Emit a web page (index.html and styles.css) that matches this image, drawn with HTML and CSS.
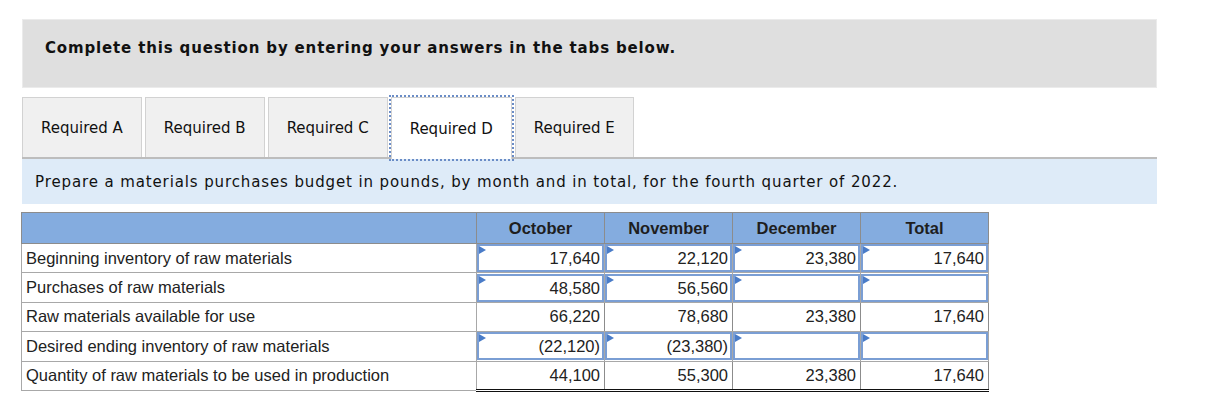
FILE: index.html
```html
<!DOCTYPE html>
<html>
<head>
<meta charset="utf-8">
<link rel="stylesheet" href="styles.css">
</head>
<body>
<div class="page">
  <div class="prompt">Complete this question by entering your answers in the tabs below.</div>
  <div class="tabs">
    <div class="tab">Required A</div>
    <div class="tab">Required B</div>
    <div class="tab">Required C</div>
    <div class="tab active">Required D</div>
    <div class="tab">Required E</div>
  </div>
  <div class="band">Prepare a materials purchases budget in pounds, by month and in total, for the fourth quarter of 2022.</div>
  <table class="budget">
    <colgroup>
      <col class="c-label"><col class="c-num"><col class="c-num"><col class="c-num"><col class="c-num">
    </colgroup>
    <thead>
      <tr><th></th><th>October</th><th>November</th><th>December</th><th>Total</th></tr>
    </thead>
    <tbody>
      <tr>
        <td class="label">Beginning inventory of raw materials</td>
        <td class="in"><div class="box">17,640</div></td>
        <td class="in"><div class="box">22,120</div></td>
        <td class="in"><div class="box">23,380</div></td>
        <td class="in"><div class="box">17,640</div></td>
      </tr>
      <tr>
        <td class="label">Purchases of raw materials</td>
        <td class="in"><div class="box">48,580</div></td>
        <td class="in"><div class="box">56,560</div></td>
        <td class="in"><div class="box"></div></td>
        <td class="in"><div class="box"></div></td>
      </tr>
      <tr class="sub">
        <td class="label">Raw materials available for use</td>
        <td class="num">66,220</td>
        <td class="num">78,680</td>
        <td class="num">23,380</td>
        <td class="num">17,640</td>
      </tr>
      <tr>
        <td class="label">Desired ending inventory of raw materials</td>
        <td class="in"><div class="box">(22,120)</div></td>
        <td class="in"><div class="box">(23,380)</div></td>
        <td class="in"><div class="box"></div></td>
        <td class="in"><div class="box"></div></td>
      </tr>
      <tr class="sub total">
        <td class="label">Quantity of raw materials to be used in production</td>
        <td class="num">44,100</td>
        <td class="num">55,300</td>
        <td class="num">23,380</td>
        <td class="num">17,640</td>
      </tr>
    </tbody>
  </table>
</div>
</body>
</html>
```

FILE: styles.css
```css
html, body {
  margin: 0;
  padding: 0;
  background: #fff;
}

.page {
  padding: 19px 0 0 22px;
  width: 1135px;
}

.prompt {
  box-sizing: border-box;
  height: 69px;
  background: #dfdfdf;
  border: 1px solid #ebebeb;
  padding: 19px 0 0 22px;
  font-family: "DejaVu Sans", Verdana, sans-serif;
  font-weight: bold;
  font-size: 15px;
  letter-spacing: 0.85px;
  line-height: 18px;
  color: #111;
}

.tabs {
  display: flex;
  gap: 3px;
  margin-top: 9px;
  height: 60px;
  position: relative;
  z-index: 1;
}

.tab {
  box-sizing: border-box;
  display: flex;
  align-items: center;
  padding: 0 18px;
  background: #f0f0f0;
  border: 1px solid #d2d2d2;
  border-bottom: none;
  font-family: "DejaVu Sans", Verdana, sans-serif;
  font-size: 15px;
  color: #111;
}

.tab.active {
  background: #fff;
  outline: 2px dotted #6a8cc6;
  outline-offset: 0;
  height: 62px;
}

.band {
  box-sizing: border-box;
  height: 47px;
  border-top: 2px solid #bdbdbd;
  background: #deebf8;
  padding-left: 13px;
  display: flex;
  align-items: center;
  font-family: "DejaVu Sans", Verdana, sans-serif;
  font-size: 15px;
  letter-spacing: 0.88px;
  color: #111;
}

.budget {
  margin-top: 8px;
  margin-left: -1px;
  border-collapse: collapse;
  table-layout: fixed;
  width: 967px;
  font-family: "Liberation Sans", Arial, sans-serif;
  font-size: 16.5px;
  color: #222;
}

.c-label { width: 455px; }
.c-num { width: 128px; }

.budget th {
  height: 30px;
  background: #84acdf;
  border: 1px solid #8c8c8c;
  font-weight: bold;
  text-align: center;
  padding: 0;
  color: #1e1e1e;
}

.budget td {
  height: 29.4px;
  border: 1px solid #a8a8a8;
  padding: 0;
  box-sizing: border-box;
}

.budget td.label {
  padding-left: 4px;
  white-space: nowrap;
}

.budget td.num {
  text-align: right;
  padding-right: 4px;
  border-left-color: #8c8c8c;
  border-right-color: #8c8c8c;
}

.budget td.in {
  padding: 0;
}

.box {
  position: relative;
  box-sizing: border-box;
  height: 28px;
  border: 2px solid #7a9ed4;
  text-align: right;
  padding-right: 2px;
  line-height: 24px;
}

.box::before {
  content: "";
  position: absolute;
  left: 0;
  top: 0;
  border-left: 7px solid #4a7cc8;
  border-top: 4px solid transparent;
  border-bottom: 4px solid transparent;
}

.sub td.num {
  border-top: 1px solid #111;
}

.total td.num {
  border-bottom: 3px double #111;
}
```
